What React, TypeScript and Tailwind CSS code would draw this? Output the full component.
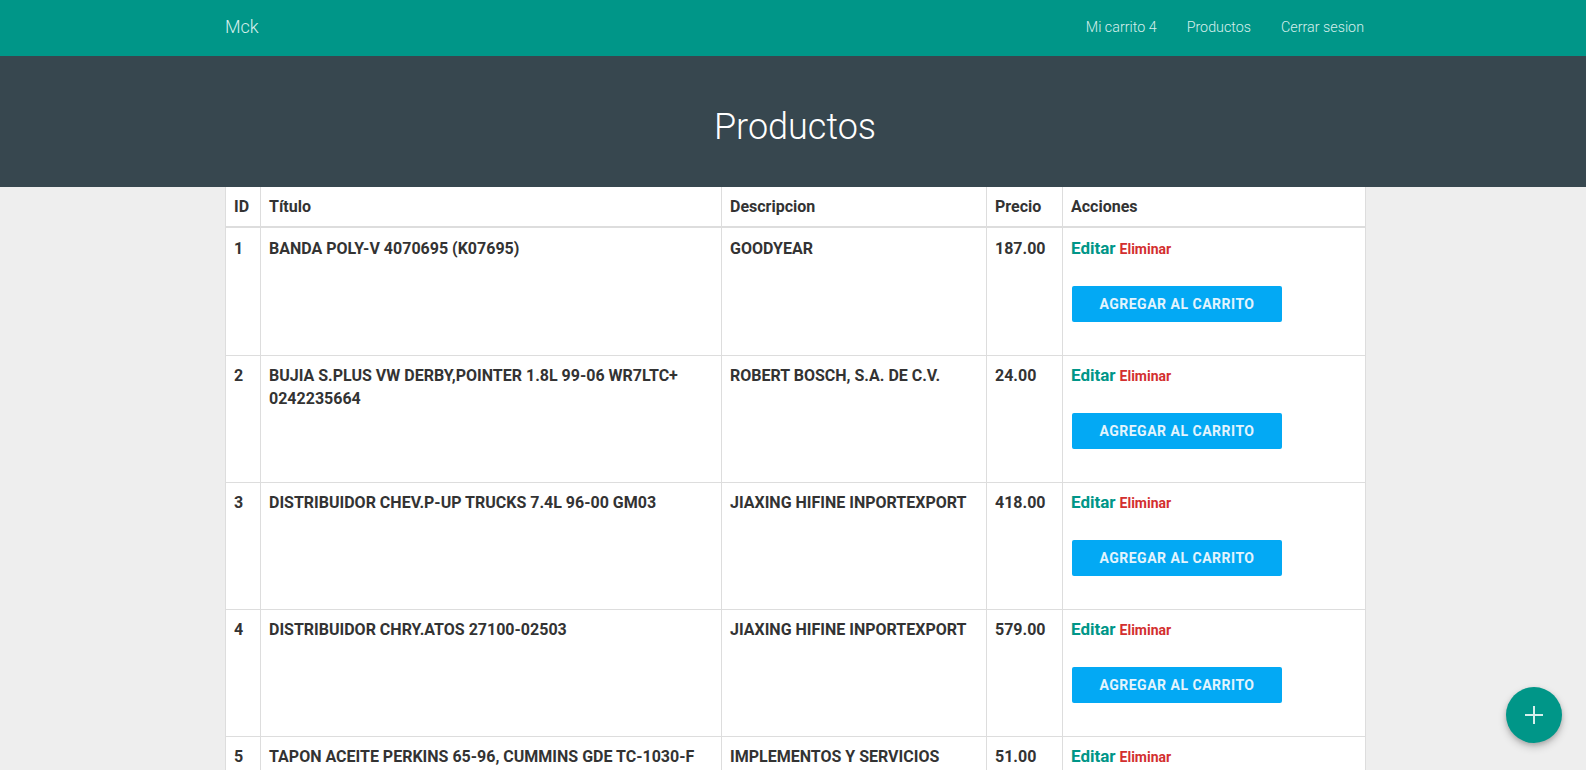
import React from 'react';

type Producto = { id: number; titulo: string; descripcion: string; precio: string };

const productos: Producto[] = [
  { id: 1, titulo: 'BANDA POLY-V 4070695 (K07695)', descripcion: 'GOODYEAR', precio: '187.00' },
  { id: 2, titulo: 'BUJIA S.PLUS VW DERBY,POINTER 1.8L 99-06 WR7LTC+ 0242235664', descripcion: 'ROBERT BOSCH, S.A. DE C.V.', precio: '24.00' },
  { id: 3, titulo: 'DISTRIBUIDOR CHEV.P-UP TRUCKS 7.4L 96-00 GM03', descripcion: 'JIAXING HIFINE INPORTEXPORT', precio: '418.00' },
  { id: 4, titulo: 'DISTRIBUIDOR CHRY.ATOS 27100-02503', descripcion: 'JIAXING HIFINE INPORTEXPORT', precio: '579.00' },
  { id: 5, titulo: 'TAPON ACEITE PERKINS 65-96, CUMMINS GDE TC-1030-F', descripcion: 'IMPLEMENTOS Y SERVICIOS', precio: '51.00' },
];

const cell = 'border-x border-[#dddddd] px-[8px] pt-[8px] pb-[8px] align-top leading-[23px]';
const firstCell = 'border-x border-[#dddddd] px-[8px] pt-[9px] pb-[8px] align-top leading-[23px]';

export default function App() {
  return (
    <div
      className="relative h-[770px] overflow-hidden bg-[#eeeeee] text-[#333333]"
      style={{ fontFamily: 'Roboto, "Liberation Sans", sans-serif' }}
    >
      {/* Navbar */}
      <nav className="h-[56px] bg-[#009688] pl-[4px]">
        <div className="mx-auto flex h-full w-[1140px] items-center justify-between">
          <span className="pb-[3px] text-[18px] font-light text-[#d6efec]">Mck</span>
          <div className="flex items-center pb-[1px] text-[14.3px] font-light text-[#d6efec]">
            <a className="px-[15px]">Mi carrito 4</a>
            <a className="px-[15px]">Productos</a>
            <a className="pl-[15px] pr-[1px]">Cerrar sesion</a>
          </div>
        </div>
      </nav>

      {/* Header */}
      <header className="flex h-[131px] items-center justify-center bg-[#37474f] pl-[4px]">
        <h1 className="pt-[10px] text-[36px] font-light text-white">Productos</h1>
      </header>

      {/* Table */}
      <div className="pl-[4px]">
        <div className="mx-auto w-[1140px] bg-white">
          <table className="w-[1140px] table-fixed border-collapse text-[16px] font-bold">
            <colgroup>
              <col className="w-[35px]" />
              <col className="w-[461px]" />
              <col className="w-[265px]" />
              <col className="w-[76px]" />
              <col className="w-[303px]" />
            </colgroup>
            <thead>
              <tr className="border-b-2 border-[#dddddd] text-left">
                <th className={cell}>ID</th>
                <th className={cell}>Título</th>
                <th className={cell}>Descripcion</th>
                <th className={cell}>Precio</th>
                <th className={cell}>Acciones</th>
              </tr>
            </thead>
            <tbody>
              {productos.map((p, i) => {
                const c = i === 0 ? firstCell : cell;
                return (
                  <tr key={p.id} className="border-b border-[#dddddd]">
                    <td className={c}>{p.id}</td>
                    <td className={c}>{p.titulo}</td>
                    <td className={c}>{p.descripcion}</td>
                    <td className={c}>{p.precio}</td>
                    <td className={c}>
                      <div className="flex items-baseline gap-[4px]">
                        <a className="text-[17px] text-[#009688]">Editar</a>
                        <a className="text-[14px] text-[#d32f2f]">Eliminar</a>
                      </div>
                      <button className="mx-[1px] mt-[25px] mb-[25px] block h-[36px] w-[210px] rounded-[2px] bg-[#03a9f4] text-[14px] font-bold uppercase tracking-[0.5px] text-[#e3f4fd]">
                        Agregar al carrito
                      </button>
                    </td>
                  </tr>
                );
              })}
            </tbody>
          </table>
        </div>
      </div>

      {/* Floating action button */}
      <button className="absolute bottom-[27px] right-[24px] flex h-[56px] w-[56px] items-center justify-center rounded-full bg-[#009688] shadow-[0_4px_8px_rgba(0,0,0,0.2),0_2px_4px_rgba(0,0,0,0.15)]">
        <svg width="20" height="20" viewBox="0 0 20 20">
          <path d="M10 1v18M1 10h18" stroke="#d6efec" strokeWidth="2" />
        </svg>
      </button>
    </div>
  );
}
